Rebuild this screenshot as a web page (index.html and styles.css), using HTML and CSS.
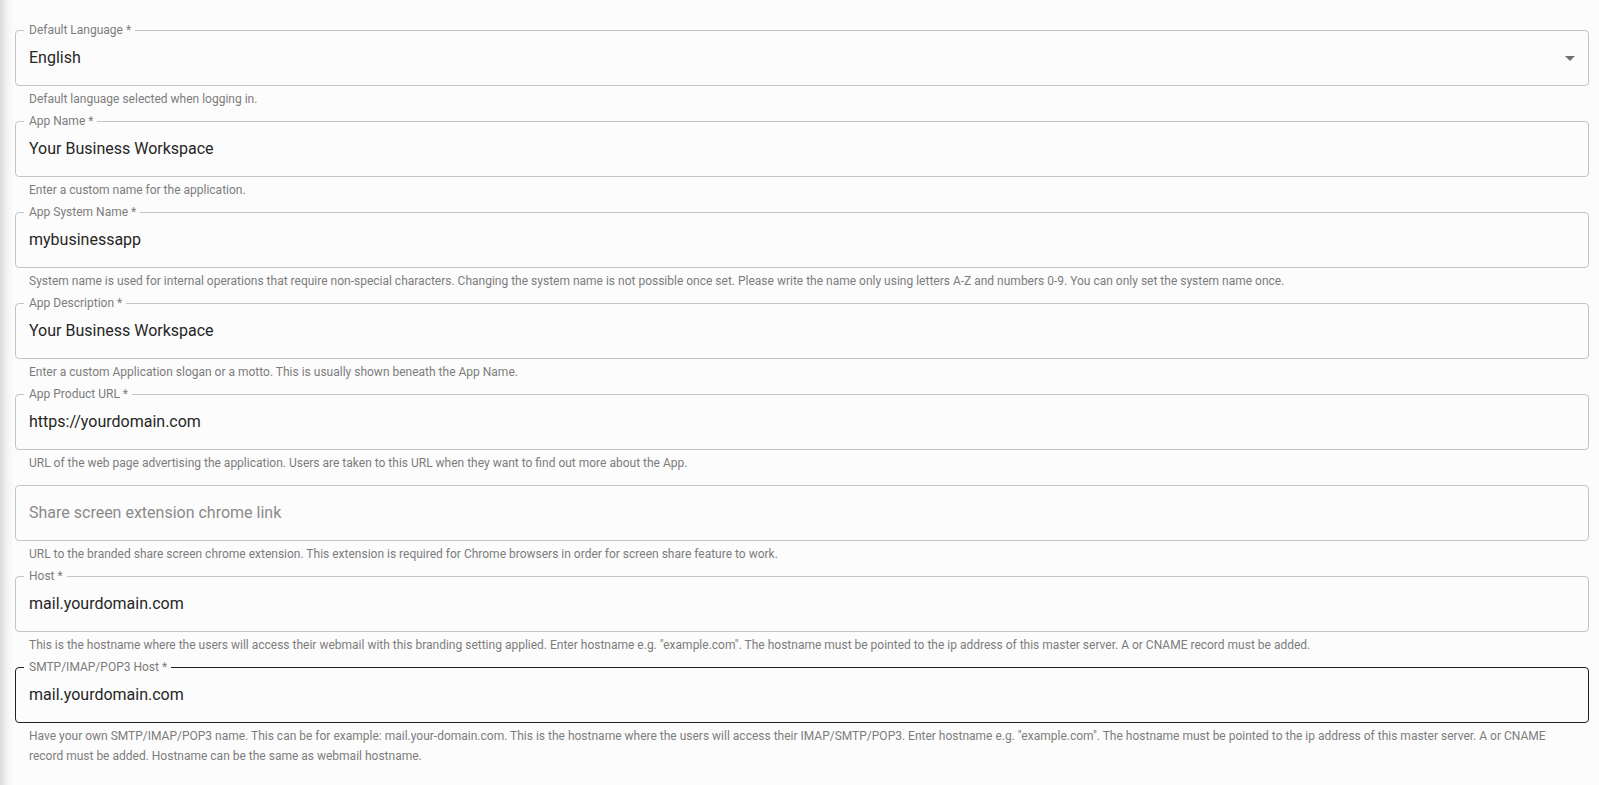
FILE: index.html
```html
<!DOCTYPE html>
<html lang="en">
<head>
    <meta charset="UTF-8">
    <meta name="viewport" content="width=device-width, initial-scale=1.0">
    <title>Branding settings</title>
    <link rel="stylesheet" href="styles.css">
</head>
<body>

    <form class="settings-form">

        <div class="field">
            <fieldset class="box">
                <legend>Default Language *</legend>
                <div class="value select">
                    <span>English</span>
                    <span class="arrow"></span>
                </div>
            </fieldset>
            <p class="helper">Default language selected when logging in.</p>
        </div>

        <div class="field">
            <fieldset class="box">
                <legend>App Name *</legend>
                <div class="value">Your Business Workspace</div>
            </fieldset>
            <p class="helper">Enter a custom name for the application.</p>
        </div>

        <div class="field">
            <fieldset class="box">
                <legend>App System Name *</legend>
                <div class="value">mybusinessapp</div>
            </fieldset>
            <p class="helper">System name is used for internal operations that require non-special characters. Changing the system name is not possible once set. Please write the name only using letters A-Z and numbers 0-9. You can only set the system name once.</p>
        </div>

        <div class="field">
            <fieldset class="box">
                <legend>App Description *</legend>
                <div class="value">Your Business Workspace</div>
            </fieldset>
            <p class="helper">Enter a custom Application slogan or a motto. This is usually shown beneath the App Name.</p>
        </div>

        <div class="field">
            <fieldset class="box">
                <legend>App Product URL *</legend>
                <div class="value">https://yourdomain.com</div>
            </fieldset>
            <p class="helper">URL of the web page advertising the application. Users are taken to this URL when they want to find out more about the App.</p>
        </div>

        <div class="field">
            <fieldset class="box">
                <legend class="legend-empty"></legend>
                <div class="value placeholder">Share screen extension chrome link</div>
            </fieldset>
            <p class="helper">URL to the branded share screen chrome extension. This extension is required for Chrome browsers in order for screen share feature to work.</p>
        </div>

        <div class="field">
            <fieldset class="box">
                <legend>Host *</legend>
                <div class="value">mail.yourdomain.com</div>
            </fieldset>
            <p class="helper">This is the hostname where the users will access their webmail with this branding setting applied. Enter hostname e.g. "example.com". The hostname must be pointed to the ip address of this master server. A or CNAME record must be added.</p>
        </div>

        <div class="field">
            <fieldset class="box hover">
                <legend>SMTP/IMAP/POP3 Host *</legend>
                <div class="value">mail.yourdomain.com</div>
            </fieldset>
            <p class="helper">Have your own SMTP/IMAP/POP3 name. This can be for example: mail.your-domain.com. This is the hostname where the users will access their IMAP/SMTP/POP3. Enter hostname e.g. "example.com". The hostname must be pointed to the ip address of this master server. A or CNAME record must be added. Hostname can be the same as webmail hostname.</p>
        </div>

    </form>

</body>
</html>
```

FILE: styles.css
```css
body {
    margin: 0;
    font-family: Roboto, "Helvetica Neue", Arial, sans-serif;
    background: linear-gradient(to right, #d9d9d9 0, #f3f3f3 7px, #fcfcfc 14px) #fcfcfc;
    min-height: 100vh;
}

.settings-form {
    padding: 23px 10px 0 15px;
}

.field {
    margin-bottom: 5px;
}

.box {
    margin: 0;
    padding: 11px 13px 17px;
    border: 1px solid #c4c4c4;
    border-radius: 4px;
    min-width: 0;
}

.box.hover {
    border-color: #212121;
}

.box legend {
    margin-left: -5px;
    padding: 0 4px 0 5px;
    font-size: 12px;
    line-height: 14px;
    height: 14px;
    color: #7c7c7c;
}

.box .legend-empty {
    padding: 0;
}

.value {
    font-size: 16px;
    line-height: 20px;
    color: #262626;
}

.value.placeholder {
    color: #8a8a8a;
}

.select {
    display: flex;
    justify-content: space-between;
    align-items: center;
}

.arrow {
    width: 0;
    height: 0;
    border-left: 5px solid transparent;
    border-right: 5px solid transparent;
    border-top: 5px solid #707070;
}

.helper {
    margin: 3px 14px 0;
    font-size: 12px;
    line-height: 20px;
    color: #7c7c7c;
}
```
